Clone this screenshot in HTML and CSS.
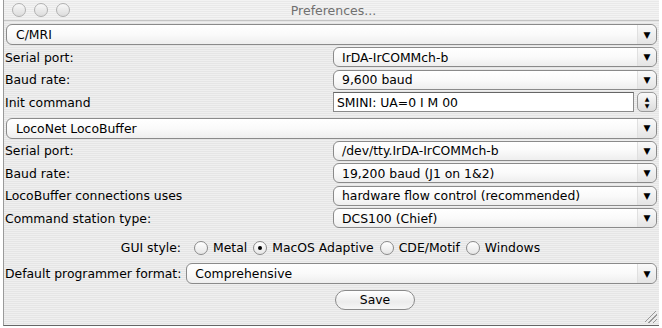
FILE: index.html
```html
<!DOCTYPE html>
<html lang="en">
<head>
<meta charset="UTF-8">
<title>Preferences...</title>
<link rel="stylesheet" href="styles.css">
</head>
<body>
<div class="window">
  <div class="titlebar">
    <div class="lights"><span></span><span></span><span></span></div>
    <div class="title">Preferences...</div>
  </div>
  <div class="content">
    <div class="combo wide"><span>C/MRI</span><i>&#9660;</i></div>
    <div class="row"><label>Serial port:</label><div class="combo"><span>IrDA-IrCOMMch-b</span><i>&#9660;</i></div></div>
    <div class="row"><label>Baud rate:</label><div class="combo"><span>9,600 baud</span><i>&#9660;</i></div></div>
    <div class="row"><label>Init command</label>
      <div class="spin-field"><div class="text">SMINI: UA=0 I M 00</div><div class="spinner"><b>&#9650;</b><b>&#9660;</b></div></div>
    </div>
    <div class="combo wide second"><span>LocoNet LocoBuffer</span><i>&#9660;</i></div>
    <div class="row"><label>Serial port:</label><div class="combo"><span>/dev/tty.IrDA-IrCOMMch-b</span><i>&#9660;</i></div></div>
    <div class="row"><label>Baud rate:</label><div class="combo"><span>19,200 baud (J1 on 1&amp;2)</span><i>&#9660;</i></div></div>
    <div class="row"><label>LocoBuffer connections uses</label><div class="combo"><span>hardware flow control (recommended)</span><i>&#9660;</i></div></div>
    <div class="row"><label>Command station type:</label><div class="combo"><span>DCS100 (Chief)</span><i>&#9660;</i></div></div>
    <div class="radios">
      <span class="lbl">GUI style:</span>
      <span class="radio"></span><span>Metal</span>
      <span class="radio on"></span><span>MacOS Adaptive</span>
      <span class="radio"></span><span>CDE/Motif</span>
      <span class="radio"></span><span>Windows</span>
    </div>
    <div class="prog-row"><label>Default programmer format:</label><div class="combo"><span>Comprehensive</span><i>&#9660;</i></div></div>
    <div class="save-row"><button>Save</button></div>
  </div>
  <div class="grip"></div>
</div>
</body>
</html>
```
FILE: styles.css
```css
body {
  margin: 0;
  background: #fff;
  font-family: "DejaVu Sans", Verdana, sans-serif;
  font-size: 12.4px;
  color: #000;
}
.window {
  position: relative;
  margin-left: 3px;
  width: 656px;
  height: 326px;
  border-left: 1px solid #9a9a9a;
  border-bottom: 1px solid #666;
  box-sizing: border-box;
  background: repeating-linear-gradient(#efefef 0 1px, #e5e5e5 1px 2px);
}
.titlebar {
  height: 20px;
  display: flex;
  align-items: center;
  border-bottom: 1px solid #c4c4c4;
  background: repeating-linear-gradient(#f3f3f3 0 1px, #e9e9e9 1px 2px);
}
.lights {
  display: flex;
  gap: 8px;
  padding-left: 8px;
}
.lights span {
  width: 12px;
  height: 12px;
  border-radius: 50%;
  border: 1px solid #b0b0b0;
  background: linear-gradient(#f8f8f8, #dcdcdc);
}
.title {
  flex: 1;
  text-align: center;
  color: #707070;
  font-size: 12.5px;
  padding-right: 62px;
}
.content {
  padding: 2px 1px 0 1px;
}
.row {
  display: grid;
  grid-template-columns: 328px 1fr;
  align-items: center;
  height: 22.5px;
}
.combo {
  display: flex;
  align-items: center;
  height: 20px;
  border: 1px solid #8a8a8a;
  border-radius: 6px;
  background: linear-gradient(#fff 0%, #fafafa 50%, #eeeeee 100%);
  box-sizing: border-box;
  margin-right: 1px;
}
.combo span {
  flex: 1;
  padding-left: 8px;
  white-space: nowrap;
}
.combo i {
  font-style: normal;
  font-size: 9px;
  width: 18px;
  height: 100%;
  display: flex;
  align-items: center;
  justify-content: center;
  border-left: 1px solid #e0e0e0;
  background: linear-gradient(#fafafa, #e4e4e4);
  border-radius: 0 6px 6px 0;
}
.wide {
  height: 21px;
  margin: 1px;
}
.wide span {
  padding-left: 9px;
}
.second {
  margin-top: 4px;
}
.spin-field {
  display: flex;
  height: 20px;
  gap: 3px;
}
.spin-field .text {
  flex: 1;
  background: #fff;
  border: 1px solid #8a8a8a;
  border-top-color: #666;
  padding-left: 3px;
  display: flex;
  align-items: center;
}
.spinner {
  width: 20px;
  border: 1px solid #9a9a9a;
  border-radius: 5px;
  background: linear-gradient(#fafafa, #dcdcdc);
  display: flex;
  flex-direction: column;
  align-items: center;
  justify-content: center;
  box-sizing: border-box;
  margin-right: 1px;
}
.spinner b {
  font-size: 6px;
  line-height: 7px;
  font-weight: normal;
}
.radios {
  display: flex;
  align-items: center;
  justify-content: center;
  height: 20px;
  margin-top: 8px;
  padding-right: 2px;
}
.radios .lbl {
  margin-right: 7px;
}
.radio {
  width: 14px;
  height: 14px;
  border-radius: 50%;
  border: 1px solid #8a8a8a;
  box-sizing: border-box;
  background: linear-gradient(#fff, #e6e6e6);
  margin: 0 5px 0 6px;
  display: flex;
  align-items: center;
  justify-content: center;
}
.radio.on::after {
  content: "";
  width: 4px;
  height: 4px;
  border-radius: 50%;
  background: #000;
}
.prog-row {
  display: flex;
  align-items: center;
  gap: 5px;
  height: 22px;
  margin-top: 5px;
}
.prog-row .combo {
  flex: 1;
  height: 21px;
}
.save-row {
  padding-left: 330px;
  margin-top: 5px;
}
button {
  width: 80px;
  height: 20px;
  border: 1px solid #8a8a8a;
  border-radius: 10px;
  background: linear-gradient(#fff, #ececec 60%, #f6f6f6);
  font-family: "DejaVu Sans", Verdana, sans-serif;
  font-size: 12.4px;
  color: #000;
  padding: 0;
}
.grip {
  position: absolute;
  right: 2px;
  bottom: 2px;
  width: 12px;
  height: 12px;
  background: linear-gradient(135deg, transparent 0 45%, #999 45% 50%, transparent 50% 62%, #999 62% 67%, transparent 67% 80%, #999 80% 85%, transparent 85%);
}
```
